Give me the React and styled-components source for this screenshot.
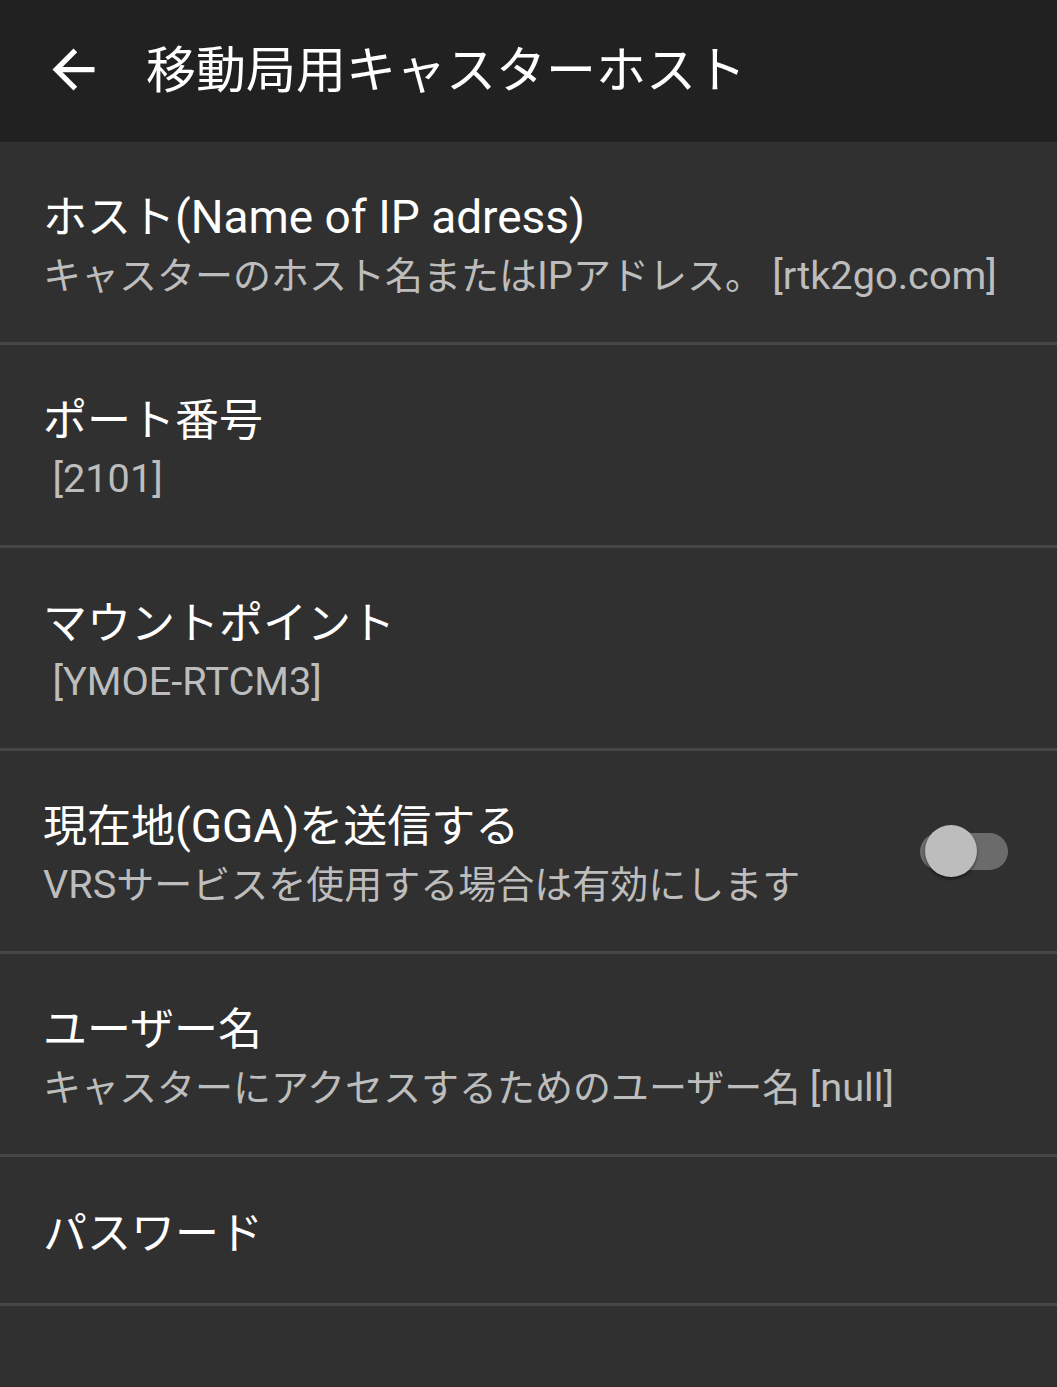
import React from 'react'
import styled, { createGlobalStyle } from 'styled-components'

const GlobalStyle = createGlobalStyle`
  html, body {
    margin: 0;
    padding: 0;
    background: #303030;
  }
  body {
    font-family: Roboto, "Noto Sans CJK JP", sans-serif;
    -webkit-font-smoothing: antialiased;
  }
`

const prefs = [
  { title: 'ホスト(Name of IP adress)', summary: 'キャスターのホスト名またはIPアドレス。 [rtk2go.com]' },
  { title: 'ポート番号', summary: ' [2101]' },
  { title: 'マウントポイント', summary: ' [YMOE-RTCM3]' },
  { title: '現在地(GGA)を送信する', summary: 'VRSサービスを使用する場合は有効にします', toggle: true },
  { title: 'ユーザー名', summary: 'キャスターにアクセスするためのユーザー名 [null]' },
  { title: 'パスワード' },
]

// latin runs are set a touch larger than the kana around them
function Mixed({ text }) {
  return text
    .split(/([\x21-\x7e][\x20-\x7e]*[\x21-\x7e]|[\x21-\x7e])/)
    .map((part, i) => (i % 2 ? <Latin key={i}>{part}</Latin> : part))
}

function App() {
  return (
    <>
      <GlobalStyle />
      <Screen>
        <Toolbar>
          <BackButton>
            <svg viewBox="0 0 24 24" width="63" height="63">
              <path fill="#fff" d="M20 11H7.83l5.59-5.59L12 4l-8 8 8 8 1.41-1.41L7.83 13H20v-2z" />
            </svg>
          </BackButton>
          <ToolbarTitle>移動局用キャスターホスト</ToolbarTitle>
        </Toolbar>
        <List>
          {prefs.map((p) => (
            <Pref key={p.title} single={!p.summary}>
              <Texts>
                <Title><Mixed text={p.title} /></Title>
                {p.summary && <Summary><Mixed text={p.summary} /></Summary>}
              </Texts>
              {p.toggle && (
                <Switch>
                  <Track />
                  <Thumb />
                </Switch>
              )}
            </Pref>
          ))}
        </List>
      </Screen>
    </>
  )
}

export default App

let Screen = styled.div`
  width: 1057px;
  min-height: 1387px;
  background: #303030;
`

let Toolbar = styled.div`
  height: 142px;
  background: #212121;
  display: flex;
  align-items: center;
  padding-left: 42px;
  box-sizing: border-box;
`

let BackButton = styled.div`
  width: 63px;
  height: 63px;
  display: flex;
  margin-top: -4px;
  svg {
    display: block;
  }
`

let ToolbarTitle = styled.h1`
  margin: 0 0 0 41px;
  font-size: 50px;
  font-weight: 400;
  line-height: 60px;
  color: #fff;
`

let List = styled.div`
  display: flex;
  flex-direction: column;
`

let Pref = styled.div`
  display: flex;
  align-items: center;
  justify-content: space-between;
  box-sizing: border-box;
  height: ${(p) => (p.single ? '149px' : '203px')};
  padding: 0 49px 0 43px;
  border-bottom: 3px solid #464646;
`

let Texts = styled.div`
  display: flex;
  flex-direction: column;
  margin-top: 7px;
`

let Latin = styled.span`
  font-size: 1.045em;
`

let Title = styled.div`
  font-size: 44px;
  line-height: 60px;
  color: #fff;
`

let Summary = styled.div`
  font-size: 38px;
  line-height: 56px;
  color: #bdbdbd;
  white-space: pre;
`

let Switch = styled.div`
  position: relative;
  width: 88px;
  height: 52px;
  flex-shrink: 0;
`

let Track = styled.div`
  position: absolute;
  left: 0;
  right: 0;
  top: 8px;
  height: 37px;
  border-radius: 19px;
  background: #6b6b6b;
`

let Thumb = styled.div`
  position: absolute;
  left: 5px;
  top: 0;
  width: 52px;
  height: 52px;
  border-radius: 50%;
  background: #bdbdbd;
  box-shadow: 0 2px 3px rgba(0, 0, 0, 0.45);
`
